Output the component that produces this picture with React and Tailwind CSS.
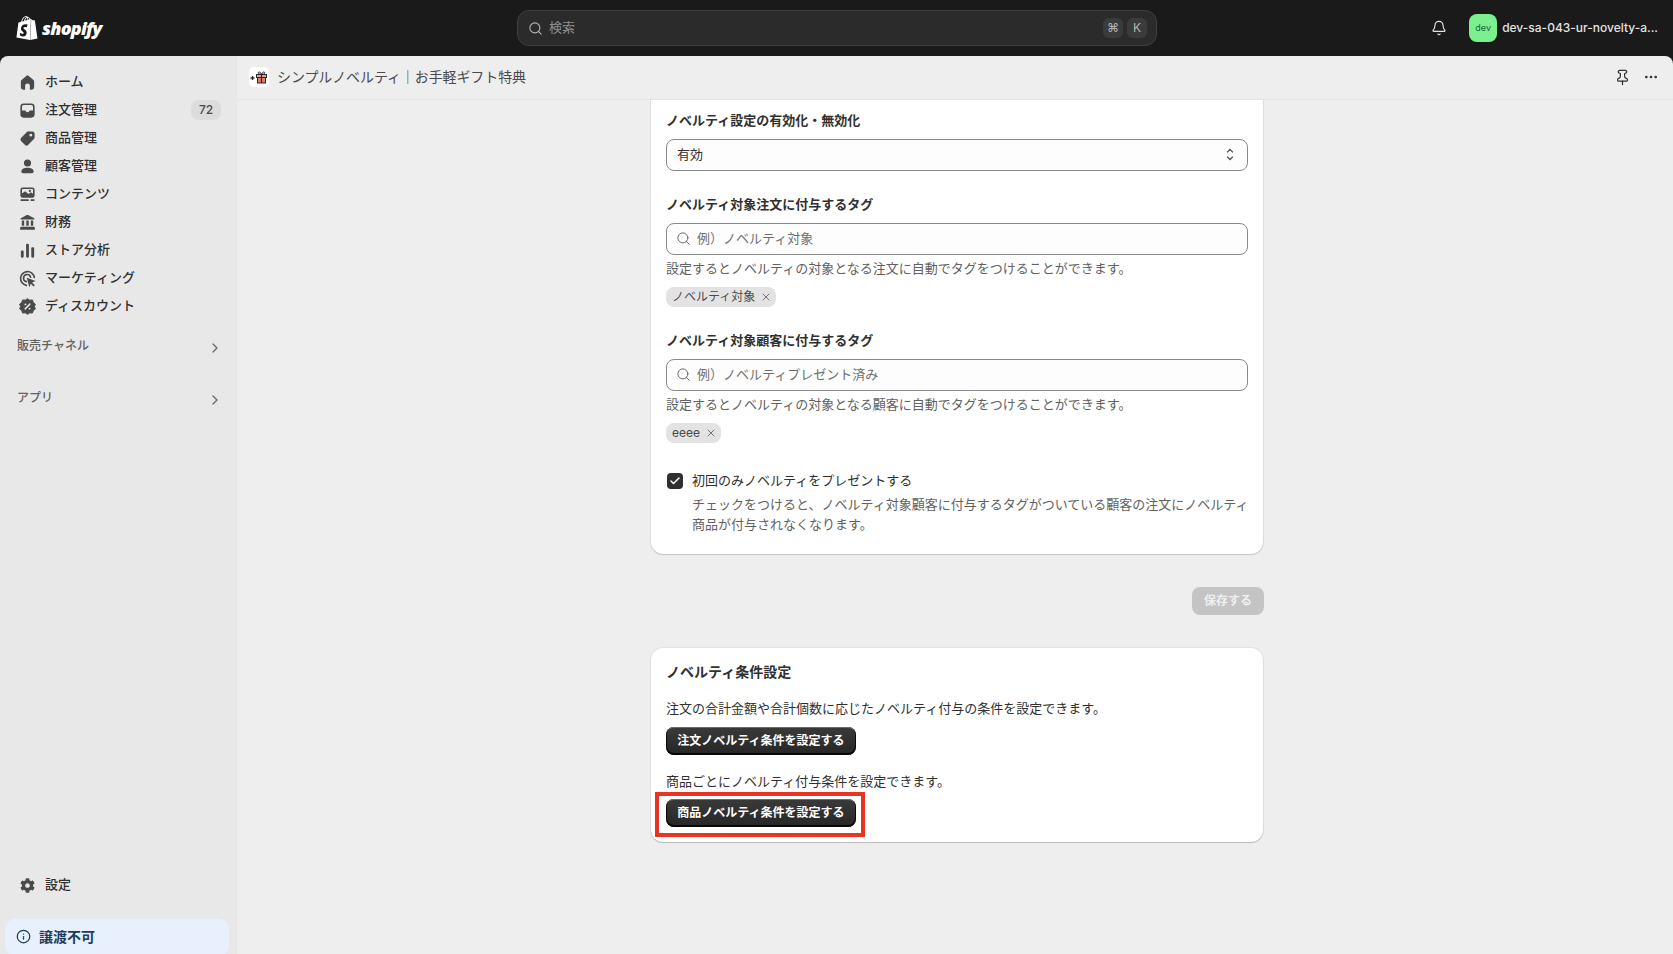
import { Bell, Check, ChevronRight, Ellipsis, Info, Pin, Search, X } from "lucide-react";
import { SiShopify } from "react-icons/si";
import { FaCog } from "react-icons/fa";

const navItems = [
  { label: "ホーム", icon: "home" },
  { label: "注文管理", icon: "orders", badge: "72" },
  { label: "商品管理", icon: "tag" },
  { label: "顧客管理", icon: "person" },
  { label: "コンテンツ", icon: "content" },
  { label: "財務", icon: "finance" },
  { label: "ストア分析", icon: "chart" },
  { label: "マーケティング", icon: "target" },
  { label: "ディスカウント", icon: "discount" },
];

function NavIcon({ name }) {
  return (
    <svg viewBox="0 0 20 20" fill="#4a4a4a" fillRule="evenodd" className="w-[19px] h-[19px] shrink-0">
      {name === "home" && (
        <path d="M11 2.900a1.500 1.500 0 0 0-2 0L3.700 7.400A2.200 2.200 0 0 0 3 9v6a2.500 2.500 0 0 0 2.500 2.500h2v-4a2.500 2.500 0 0 1 5 0v4h2A2.500 2.500 0 0 0 17 15V9a2.200 2.200 0 0 0-.7-1.600z" />
      )}
      {name === "orders" && (
        <path d="M6 2.500A3.500 3.500 0 0 0 2.500 6v8A3.500 3.500 0 0 0 6 17.500h8a3.500 3.500 0 0 0 3.500-3.500V6A3.500 3.500 0 0 0 14 2.500zM4.200 6A1.800 1.800 0 0 1 6 4.200h8A1.800 1.800 0 0 1 15.800 6v4h-2.900a1 1 0 0 0-.9.6 2.200 2.200 0 0 1-4 0 1 1 0 0 0-.9-.6H4.200z" />
      )}
      {name === "tag" && (
        <path d="M11.200 2.500H15a2.500 2.500 0 0 1 2.500 2.500v3.800a2.500 2.500 0 0 1-.7 1.800l-6 6a2.500 2.500 0 0 1-3.600 0l-3.800-3.800a2.500 2.500 0 0 1 0-3.600l6-6a2.500 2.500 0 0 1 1.800-.7zM13.500 5a1.500 1.500 0 1 0 0 3 1.500 1.500 0 0 0 0-3z" />
      )}
      {name === "person" && (
        <path d="M10 2.500a3.750 3.750 0 1 1 0 7.500 3.750 3.750 0 0 1 0-7.500zM3.500 15.200c0-2.500 2.800-4 6.500-4s6.500 1.500 6.500 4c0 1.200-.9 1.800-1.800 1.800H5.300c-.9 0-1.800-.6-1.800-1.800z" />
      )}
      {name === "content" && (
        <>
          <path d="M5 2.500A2.500 2.500 0 0 0 2.500 5v6A2.500 2.500 0 0 0 5 13.500h10a2.500 2.500 0 0 0 2.500-2.500V5A2.500 2.500 0 0 0 15 2.500zM4.200 5A.8.8 0 0 1 5 4.200h10a.8.8 0 0 1 .8.8v4.200l-2.300-1.700-2.500 2-3.500-3-3.300 2.500zM12.500 5a1.200 1.200 0 1 1 0 2.400 1.200 1.200 0 0 1 0-2.400z" />
          <rect x="2.500" y="15" width="9" height="1.800" rx=".9" />
          <rect x="13" y="15" width="4.500" height="1.800" rx=".9" />
        </>
      )}
      {name === "finance" && (
        <path d="M9.300 2.200a1.500 1.500 0 0 1 1.400 0l6.300 3.300c.6.300.4 1.300-.3 1.300H3.300c-.7 0-.9-1-.3-1.300zM4 8h2.500v5.500H4zM8.700 8h2.600v5.500H8.700zM13.500 8H16v5.500h-2.500zM3.500 14.500h13a1.250 1.250 0 0 1 1.250 1.250v1.750H2.250v-1.750A1.250 1.250 0 0 1 3.500 14.500z" />
      )}
      {name === "chart" && (
        <>
          <rect x="3" y="10" width="3" height="7.500" rx="1.200" />
          <rect x="8.500" y="3" width="3" height="14.500" rx="1.200" />
          <rect x="14" y="6.500" width="3" height="11" rx="1.200" />
        </>
      )}
      {name === "target" && (
        <>
          <path
            d="M8.800 17.200A7.300 7.300 0 1 1 17.200 8.800M8.700 13.300A3.800 3.800 0 1 1 13.300 8.700"
            fill="none"
            stroke="#4a4a4a"
            strokeWidth="1.700"
            strokeLinecap="round"
          />
          <path d="M9.200 9.200l9.300 3.300-3.700 1.600 2.900 3-1.400 1.400-2.900-3-1.500 3.700z" />
        </>
      )}
      {name === "discount" && (
        <>
          <path
            d="M10 1.800l2.400 1.500 2.800-.2.900 2.700 2.200 1.700-1 2.500 1 2.500-2.200 1.700-.9 2.700-2.800-.2-2.400 1.500-2.400-1.500-2.800.2-.9-2.700-2.200-1.700 1-2.500-1-2.500 2.200-1.700.9-2.700 2.800.2z"
            stroke="#4a4a4a"
            strokeWidth="1"
            strokeLinejoin="round"
          />
          <path d="M7.500 12.500l5-5" stroke="#e8e8e8" strokeWidth="1.500" strokeLinecap="round" />
          <circle cx="7.800" cy="7.800" r="1" fill="#e8e8e8" />
          <circle cx="12.200" cy="12.200" r="1" fill="#e8e8e8" />
        </>
      )}
    </svg>
  );
}

function NavRow({ item }) {
  return (
    <div className="flex items-center h-7 pl-[18px] pr-4 text-[13px] font-medium text-[#303030]">
      <NavIcon name={item.icon} />
      <span className="ml-[8px] whitespace-nowrap">{item.label}</span>
      {item.badge && (
        <span className="ml-auto flex items-center justify-center w-[30px] h-5 rounded-lg bg-[#dcdcdc] text-xs text-[#4a4a4a]">
          {item.badge}
        </span>
      )}
    </div>
  );
}

function Sidebar() {
  return (
    <aside className="w-[237px] shrink-0 flex flex-col bg-[#e8e8e8] overflow-hidden">
      <nav className="pt-3">
        {navItems.map((item) => (
          <NavRow key={item.label} item={item} />
        ))}
        <div className="mt-3 flex items-center justify-between h-7 pl-[17px] pr-[14px] text-xs font-medium text-[#616161]">
          <span>販売チャネル</span>
          <ChevronRight className="mt-1 text-[#6b6b6b]" size={16} />
        </div>
        <div className="mt-[24px] flex items-center justify-between h-7 pl-[17px] pr-[14px] text-xs font-medium text-[#616161]">
          <span>アプリ</span>
          <ChevronRight className="mt-1 text-[#6b6b6b]" size={16} />
        </div>
      </nav>
      <div className="mt-auto">
        <div className="flex items-center h-7 pl-[18px] text-[13px] font-medium text-[#303030]">
          <FaCog className="text-[#4a4a4a] w-[15px] h-[15px] mx-[2px]" />
          <span className="ml-[8px]">設定</span>
        </div>
        <div className="mt-5 ml-[5px] mr-[8px] h-[37px] -mb-[2px] pb-[2px] rounded-[10px] bg-[#e8f0fd] flex items-center pl-[11px] text-sm font-semibold text-[#1c3d5e]">
          <Info size={15} strokeWidth={2} />
          <span className="ml-[8px]">譲渡不可</span>
        </div>
      </div>
    </aside>
  );
}

function TopBar() {
  return (
    <header className="h-14 shrink-0 bg-[#1a1a1a] flex items-center">
      <div className="w-[517px] shrink-0 pl-[15px] flex items-center text-white">
        <SiShopify className="w-6 h-6" />
        <span className="ml-[3px] text-[18px] leading-none font-extrabold italic tracking-[-0.8px] font-['Open_Sans',sans-serif]">
          shopify
        </span>
      </div>
      <div className="w-[640px] h-9 rounded-xl bg-[#2b2b2b] border border-[#3f3f3f] flex items-center pl-[10px] pr-[9px] text-[13px] text-[#8f8f8f]">
        <Search size={15} strokeWidth={1.75} className="text-[#b5b5b5]" />
        <span className="ml-[6px]">検索</span>
        <span className="ml-auto flex gap-1 text-xs text-[#b5b5b5]">
          <kbd className="w-5 h-5 rounded-md bg-[#3b3b3b] flex items-center justify-center font-[inherit]">⌘</kbd>
          <kbd className="w-5 h-5 rounded-md bg-[#3b3b3b] flex items-center justify-center font-[inherit]">K</kbd>
        </span>
      </div>
      <div className="ml-auto flex items-center pr-[15px]">
        <Bell size={16} strokeWidth={1.75} className="text-[#e3e3e3]" />
        <div className="ml-[22px] w-7 h-7 rounded-lg bg-[#7bf08f] flex items-center justify-center text-[9px] text-[#17633a]">
          dev
        </div>
        <span className="ml-[5px] text-xs font-medium text-[#e3e3e3] whitespace-nowrap">dev-sa-043-ur-novelty-a...</span>
      </div>
    </header>
  );
}

function GiftIcon() {
  return (
    <span className="w-5 h-5 rounded-[5px] bg-white flex items-center justify-center shrink-0">
      <svg viewBox="0 0 20 20" className="w-5 h-5">
        <path d="M1.500 11h4M3.500 9v4" stroke="#303030" strokeWidth="1.400" />
        <rect x="7.500" y="7.500" width="10" height="3" fill="#e9a090" stroke="#2b2b2b" strokeWidth="1" />
        <rect x="8.500" y="10.500" width="8" height="5.500" fill="#de7a68" stroke="#2b2b2b" strokeWidth="1" />
        <path d="M12.500 7.500v8.500" stroke="#2b2b2b" strokeWidth="1.200" />
        <path d="M12.500 7.300c-1-2.500-3.200-3-3.300-1.500-.1 1.200 1.800 1.500 3.300 1.500zM12.500 7.300c1-2.500 3.200-3 3.300-1.500.1 1.200-1.800 1.500-3.300 1.500z" fill="none" stroke="#2b2b2b" strokeWidth="1" />
      </svg>
    </span>
  );
}

function FieldLabel({ children }) {
  return <div className="h-5 leading-5 text-[13px] font-semibold text-[#303030]">{children}</div>;
}

function SearchInput({ placeholder }) {
  return (
    <div className="mt-[9px] h-8 rounded-lg border border-[#8a8a8a] bg-[#fdfdfd] flex items-center pl-[9px] pr-3">
      <Search size={15} strokeWidth={1.5} className="text-[#616161] shrink-0" />
      <input
        placeholder={placeholder}
        className="ml-[6px] w-full outline-none bg-transparent text-[13px] text-[#303030] placeholder:text-[#6f6f6f]"
      />
    </div>
  );
}

function Chip({ children }) {
  return (
    <div className="mt-[9px] inline-flex items-center h-5 rounded-lg bg-[#e3e3e3] pl-[6px] pr-[4px] text-xs text-[#4a4a4a]">
      <span>{children}</span>
      <X size={12} strokeWidth={1.75} className="ml-[5px] text-[#616161]" />
    </div>
  );
}

function DarkButton({ children }) {
  return (
    <button className="w-[190px] h-7 rounded-lg text-xs font-semibold text-white bg-gradient-to-b from-[#3a3a3a] to-[#262626] shadow-[inset_0_-1px_0_1px_rgba(0,0,0,0.8),inset_0_1px_0_rgba(255,255,255,0.25)]">
      {children}
    </button>
  );
}

export default function App() {
  return (
    <div className="h-screen w-full flex flex-col overflow-hidden bg-[#1a1a1a] font-['Inter','Noto_Sans_CJK_JP',sans-serif]">
      <TopBar />
      <div className="flex-1 flex min-h-0 rounded-t-lg overflow-hidden">
        <Sidebar />
        <main className="flex-1 flex flex-col min-w-0 bg-[#eeeeee]">
          <div className="h-[43.500px] shrink-0 border-b border-[#e3e3e3] flex items-center pl-3 pr-[14px]">
            <GiftIcon />
            <span className="ml-[8px] text-sm tracking-[-0.1px] text-[#4a4a4a]">シンプルノベルティ｜お手軽ギフト特典</span>
            <Pin size={17} strokeWidth={1.75} className="ml-auto text-[#303030]" />
            <Ellipsis size={16} strokeWidth={2} className="ml-[12px] text-[#303030]" />
          </div>
          <div className="flex-1 overflow-hidden pl-[4px] text-[13px] text-[#303030]">
            <div className="w-[612px] mx-auto">
              <section className="bg-white rounded-b-xl shadow-[0_1px_1px_rgba(26,26,26,0.2),1px_0_0_rgba(26,26,26,0.05),-1px_0_0_rgba(26,26,26,0.05)] px-[15px] pt-[10px] pb-[20px]">
                <FieldLabel>ノベルティ設定の有効化・無効化</FieldLabel>
                <div className="mt-[9px] h-8 rounded-lg border border-[#8a8a8a] bg-[#fdfdfd] flex items-center justify-between pl-[10px] pr-[12px]">
                  <span>有効</span>
                  <svg viewBox="0 0 12 18" className="w-[10px] h-[15px]" fill="none" stroke="#4a4a4a" strokeWidth="1.500">
                    <path d="M2.500 6.500L6 3l3.500 3.500M2.500 11.500L6 15l3.500-3.500" />
                  </svg>
                </div>
                <div className="mt-[23px]">
                  <FieldLabel>ノベルティ対象注文に付与するタグ</FieldLabel>
                </div>
                <SearchInput placeholder="例）ノベルティ対象" />
                <p className="mt-[3px] leading-5 text-[#616161]">設定するとノベルティの対象となる注文に自動でタグをつけることができます。</p>
                <Chip>ノベルティ対象</Chip>
                <div className="mt-[23px]">
                  <FieldLabel>ノベルティ対象顧客に付与するタグ</FieldLabel>
                </div>
                <SearchInput placeholder="例）ノベルティプレゼント済み" />
                <p className="mt-[3px] leading-5 text-[#616161]">設定するとノベルティの対象となる顧客に自動でタグをつけることができます。</p>
                <Chip>eeee</Chip>
                <div className="mt-[27px] flex">
                  <span className="ml-px mt-[3px] w-4 h-4 rounded-[4px] bg-[#303030] flex items-center justify-center shrink-0">
                    <Check size={12} strokeWidth={3} className="text-white" />
                  </span>
                  <div className="ml-[9px]">
                    <div className="leading-5 text-[#303030]">初回のみノベルティをプレゼントする</div>
                    <p className="mt-1 leading-5 text-[#616161] whitespace-nowrap">
                      チェックをつけると、ノベルティ対象顧客に付与するタグがついている顧客の注文にノベルティ
                      <br />
                      商品が付与されなくなります。
                    </p>
                  </div>
                </div>
              </section>
              <div className="mt-[33px] flex justify-end">
                <button className="-mr-px w-[72px] h-7 rounded-lg bg-[#c4c4c4] text-xs font-semibold text-[#f0f0f0]">保存する</button>
              </div>
              <section className="mt-[33px] bg-white rounded-xl shadow-[0_1px_1px_rgba(26,26,26,0.2),0_0_0_1px_rgba(26,26,26,0.05)] px-[15px] pt-[14px] pb-[15px]">
                <h2 className="h-5 leading-5 text-sm font-semibold">ノベルティ条件設定</h2>
                <p className="mt-4 leading-5">注文の合計金額や合計個数に応じたノベルティ付与の条件を設定できます。</p>
                <div className="mt-[9px]">
                  <DarkButton>注文ノベルティ条件を設定する</DarkButton>
                </div>
                <p className="mt-4 leading-5">商品ごとにノベルティ付与条件を設定できます。</p>
                <div className="mt-2 relative w-[190px]">
                  <DarkButton>商品ノベルティ条件を設定する</DarkButton>
                  <span className="absolute -left-[11px] -right-[9px] -top-[7px] -bottom-[10px] border-4 border-[#ea3323] pointer-events-none" />
                </div>
              </section>
            </div>
          </div>
        </main>
      </div>
    </div>
  );
}
